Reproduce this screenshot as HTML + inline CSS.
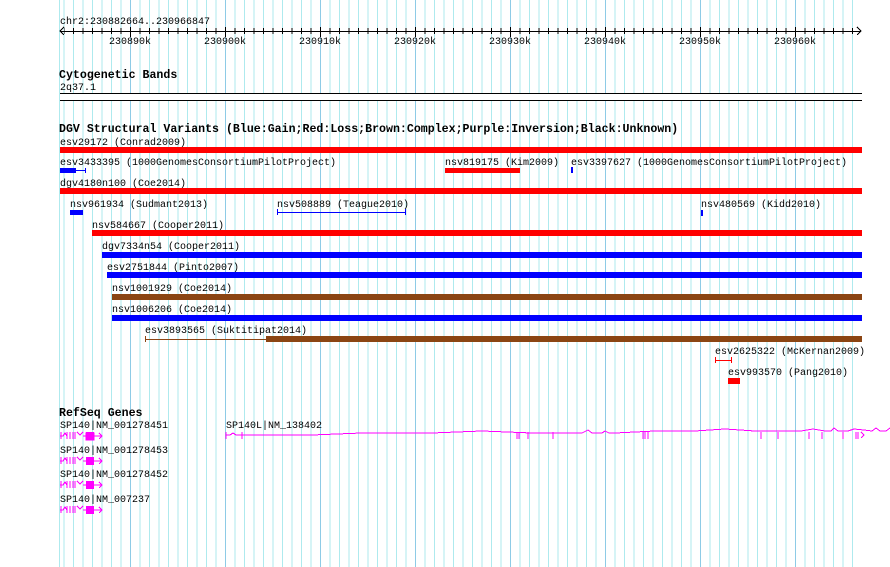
<!DOCTYPE html>
<html><head><meta charset="utf-8"><style>
html,body{margin:0;padding:0;background:#fff;width:890px;height:567px;overflow:hidden}
svg text{font-family:"Liberation Mono",monospace;font-size:10px;fill:#000}
svg text.b{font-weight:bold;font-size:11.6px}
</style></head><body>
<svg width="890" height="567" xmlns="http://www.w3.org/2000/svg" shape-rendering="crispEdges">
<defs>
<pattern id="g" x="35" y="0" width="95" height="600" patternUnits="userSpaceOnUse">
<rect x="0" y="0" width="1" height="600" fill="#8ecbe6"/>
<rect x="9.5" width="1" height="600" fill="#aeeaee"/><rect x="19" width="1" height="600" fill="#aeeaee"/>
<rect x="28.5" width="1" height="600" fill="#aeeaee"/><rect x="38" width="1" height="600" fill="#aeeaee"/>
<rect x="47.5" width="1" height="600" fill="#aeeaee"/><rect x="57" width="1" height="600" fill="#aeeaee"/>
<rect x="66.5" width="1" height="600" fill="#aeeaee"/><rect x="76" width="1" height="600" fill="#aeeaee"/>
<rect x="85.5" width="1" height="600" fill="#aeeaee"/>
</pattern>
<pattern id="t" x="35" y="0" width="95" height="50" patternUnits="userSpaceOnUse">
<rect x="0" y="27" width="1" height="10" fill="#000"/>
<rect x="9.5" y="28" width="1" height="6" fill="#000"/><rect x="19" y="28" width="1" height="6" fill="#000"/>
<rect x="28.5" y="28" width="1" height="6" fill="#000"/><rect x="38" y="28" width="1" height="6" fill="#000"/>
<rect x="47.5" y="28" width="1" height="6" fill="#000"/><rect x="57" y="28" width="1" height="6" fill="#000"/>
<rect x="66.5" y="28" width="1" height="6" fill="#000"/><rect x="76" y="28" width="1" height="6" fill="#000"/>
<rect x="85.5" y="28" width="1" height="6" fill="#000"/>
</pattern>
</defs>
<rect x="59" y="0" width="1" height="567" fill="#aeeaee"/>
<rect x="62" y="0" width="796" height="567" fill="url(#g)"/>
<rect x="60" y="93" width="803" height="8" fill="#fff"/>
<!-- ruler -->
<text x="60" y="24">chr2:230882664..230966847</text>
<rect x="60" y="31" width="801" height="1" fill="#000"/>
<rect x="64" y="25" width="795" height="12" fill="url(#t)"/>
<path d="M64 27 L60 31 L64 35 M857 27 L861 31 L857 35" stroke="#000" fill="none"/>
<text x="109" y="44">230890k</text><text x="204" y="44">230900k</text><text x="299" y="44">230910k</text><text x="394" y="44">230920k</text><text x="489" y="44">230930k</text><text x="584" y="44">230940k</text><text x="679" y="44">230950k</text><text x="774" y="44">230960k</text>
<!-- cyto -->
<text class="b" x="59" y="78">Cytogenetic Bands</text>
<text x="60" y="90">2q37.1</text>
<rect x="60" y="93" width="802" height="1" fill="#000"/>
<rect x="60" y="100" width="802" height="1" fill="#000"/>
<!-- DGV -->
<text class="b" x="59" y="132">DGV Structural Variants (Blue:Gain;Red:Loss;Brown:Complex;Purple:Inversion;Black:Unknown)</text>
<text x="60" y="145">esv29172 (Conrad2009)</text>
<rect x="60" y="147" width="802" height="6" fill="#f00"/>
<text x="60" y="165">esv3433395 (1000GenomesConsortiumPilotProject)</text>
<rect x="60" y="168" width="16" height="5" fill="#00f"/><rect x="76" y="170" width="10" height="1" fill="#00f"/><rect x="85" y="168" width="1" height="5" fill="#00f"/>
<text x="445" y="165">nsv819175 (Kim2009)</text>
<rect x="445" y="168" width="75" height="5" fill="#f00"/>
<text x="571" y="165">esv3397627 (1000GenomesConsortiumPilotProject)</text>
<rect x="571" y="167" width="2" height="6" fill="#00f"/>
<text x="60" y="186">dgv4180n100 (Coe2014)</text>
<rect x="60" y="188" width="802" height="6" fill="#f00"/>
<text x="70" y="207">nsv961934 (Sudmant2013)</text>
<rect x="70" y="210" width="13" height="5" fill="#00f"/>
<text x="277" y="207">nsv508889 (Teague2010)</text>
<rect x="277" y="212" width="128" height="1" fill="#00f"/><rect x="277" y="209" width="1" height="6" fill="#00f"/><rect x="405" y="209" width="1" height="6" fill="#00f"/>
<text x="701" y="207">nsv480569 (Kidd2010)</text>
<rect x="701" y="210" width="2" height="6" fill="#00f"/>
<text x="92" y="228">nsv584667 (Cooper2011)</text>
<rect x="92" y="230" width="770" height="6" fill="#f00"/>
<text x="102" y="249">dgv7334n54 (Cooper2011)</text>
<rect x="102" y="252" width="760" height="6" fill="#00f"/>
<text x="107" y="270">esv2751844 (Pinto2007)</text>
<rect x="107" y="272" width="755" height="6" fill="#00f"/>
<text x="112" y="291">nsv1001929 (Coe2014)</text>
<rect x="112" y="294" width="750" height="6" fill="#8b4513"/>
<text x="112" y="312">nsv1006206 (Coe2014)</text>
<rect x="112" y="315" width="750" height="6" fill="#00f"/>
<text x="145" y="333">esv3893565 (Suktitipat2014)</text>
<rect x="145" y="339" width="121" height="1" fill="#8b4513"/><rect x="145" y="336" width="1" height="6" fill="#8b4513"/>
<rect x="266" y="336" width="596" height="6" fill="#8b4513"/>
<text x="715" y="354">esv2625322 (McKernan2009)</text>
<rect x="715" y="360" width="17" height="1" fill="#f00"/><rect x="715" y="357" width="1" height="6" fill="#f00"/><rect x="731" y="357" width="1" height="6" fill="#f00"/>
<text x="728" y="375">esv993570 (Pang2010)</text>
<rect x="728" y="378" width="12" height="6" fill="#f00"/>
<!-- RefSeq -->
<text class="b" x="59" y="416">RefSeq Genes</text>
<g id="sp">
<text x="60" y="428">SP140|NM_001278451</text>
<path d="M61 432v7M60 436h3l2-3 2 3v3M67 436v-4M70 432v7M73 432v7M75 432v7M77 432l3 3 3-3M83 436h3M86 433h8v7h-8zM94 436h8M99 433l3 3-3 3" stroke="#f0f" fill="none"/>
<rect x="86" y="432" width="8" height="8" fill="#f0f"/>
</g>
<text x="60" y="453">SP140|NM_001278453</text>
<path d="M61 457v7M60 461h3l2-3 2 3v3M67 461v-4M70 457v7M73 457v7M75 457v7M77 457l3 3 3-3M83 461h3M94 461h8M99 458l3 3-3 3" stroke="#f0f" fill="none"/>
<rect x="86" y="457" width="8" height="8" fill="#f0f"/>
<text x="60" y="477">SP140|NM_001278452</text>
<path d="M61 481v7M60 485h3l2-3 2 3v3M67 485v-4M70 481v7M73 481v7M75 481v7M77 481l3 3 3-3M83 485h3M94 485h8M99 482l3 3-3 3" stroke="#f0f" fill="none"/>
<rect x="86" y="481" width="8" height="8" fill="#f0f"/>
<text x="60" y="502">SP140|NM_007237</text>
<path d="M61 506v7M60 510h3l2-3 2 3v3M67 510v-4M70 506v7M73 506v7M75 506v7M77 506l3 3 3-3M83 510h3M94 510h8M99 507l3 3-3 3" stroke="#f0f" fill="none"/>
<rect x="86" y="506" width="8" height="8" fill="#f0f"/>
<text x="226" y="428">SP140L|NM_138402</text>
<g stroke="#f0f" fill="none">
<path d="M226 435h4l3-2 3 2h6 l70 0 l50 -2 l70 0 l50 -2 l50 2 h50 l6 -3 l4 3 l10 0 l3 -2 l4 2 l6 0 l40 -2 l40 0 l30 -2 l30 2 l40 0 l6 0 l12 -2 l12 2 l6 0 l3 -3 l4 3 h10 l6 -2 l10 1 l8 1 l4 -3 l4 3 l6 0 l4 -3 l5 3 h6 l4 -3 l4 3 h8 l4 -3 l4 3 h4"/>
<path d="M226 432v7M242 432v7M517 432v7M519 432v7M528 432v7M553 432v7M643 432v7M645 432v7M648 432v7M761 432v7M778 432v7M809 432v7M822 432v7M843 432v7M856 432v7M858 432v7M861 432l3 3-3 3"/>
</g>
</svg>
</body></html>
